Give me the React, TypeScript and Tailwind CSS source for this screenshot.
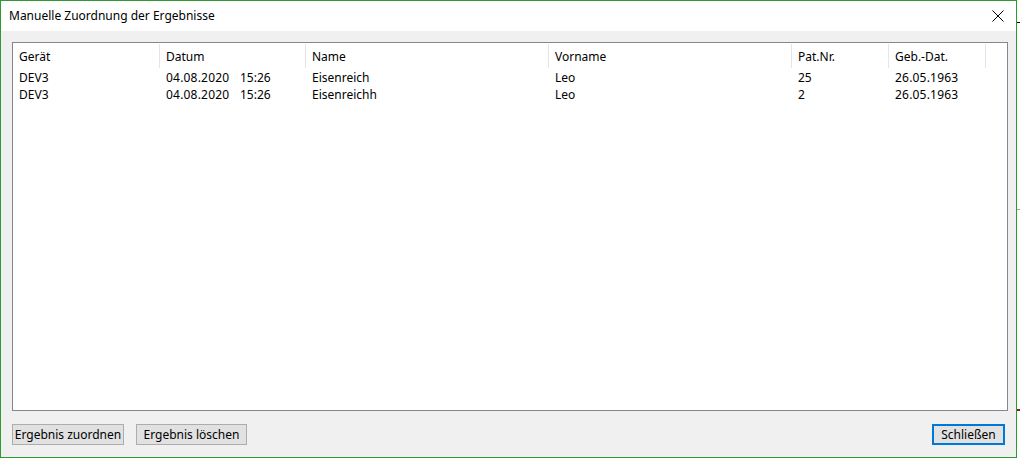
import React from 'react';

const columns = [
  { key: 'geraet', label: 'Gerät', width: 'w-[147px]' },
  { key: 'datum', label: 'Datum', width: 'w-[146px]' },
  { key: 'name', label: 'Name', width: 'w-[243px]' },
  { key: 'vorname', label: 'Vorname', width: 'w-[243px]' },
  { key: 'patnr', label: 'Pat.Nr.', width: 'w-[97px]' },
  { key: 'gebdat', label: 'Geb.-Dat.', width: 'w-[97px]' },
];

const rows = [
  { geraet: 'DEV3', datum: '04.08.2020', zeit: '15:26', name: 'Eisenreich', vorname: 'Leo', patnr: '25', gebdat: '26.05.1963' },
  { geraet: 'DEV3', datum: '04.08.2020', zeit: '15:26', name: 'Eisenreichh', vorname: 'Leo', patnr: '2', gebdat: '26.05.1963' },
];

function Button({ label, width, focused }: { label: string; width: string; focused?: boolean }) {
  return (
    <div
      className={
        'h-[21px] flex items-center justify-center bg-[#e1e1e1] text-[12px] text-black ' +
        width +
        (focused ? ' border-2 border-[#0078d7]' : ' border border-[#adadad]')
      }
    >
      {label}
    </div>
  );
}

export default function App() {
  return (
    <div className="w-[1020px] h-[459px] flex bg-white font-['Noto_Sans',sans-serif] text-[12px] text-black overflow-hidden">
      <div className="w-[1017px] h-[458px] flex flex-col border border-[#2f9a2f]">
        {/* title bar */}
        <div className="h-[30px] shrink-0 bg-white flex items-center justify-between pl-[8px] pr-[10px]">
          <span className="text-[12px] -mt-[1px]">Manuelle Zuordnung der Ergebnisse</span>
          <svg width="12" height="12" viewBox="0 0 12 12" className="mr-[2px]">
            <path d="M0.5 0.5 L11.5 11.5 M11.5 0.5 L0.5 11.5" stroke="#000" strokeWidth="1" />
          </svg>
        </div>

        {/* body */}
        <div className="flex-1 bg-[#f0f0f0] flex flex-col px-[11px] pt-[11px] pb-[11px]">
          <div className="w-[996px] h-[369px] bg-white border border-[#828790] flex flex-col">
            <div className="flex h-[26px] shrink-0">
              {columns.map((c) => (
                <div key={c.key} className={'flex items-center pl-[6px] pt-[2px] border-r border-[#e5e5e5] mt-[1px] mb-[1px] ' + c.width}>
                  {c.label}
                </div>
              ))}
            </div>
            {rows.map((r, i) => (
              <div key={i} className="flex h-[17px] items-center">
                <div className="w-[147px] pl-[6px]">{r.geraet}</div>
                <div className="w-[146px] pl-[6px] flex">
                  <span className="w-[74px] tracking-[0.2px]">{r.datum}</span>
                  <span>{r.zeit}</span>
                </div>
                <div className="w-[243px] pl-[6px]">{r.name}</div>
                <div className="w-[243px] pl-[6px]">{r.vorname}</div>
                <div className="w-[97px] pl-[6px]">{r.patnr}</div>
                <div className="w-[97px] pl-[6px] tracking-[0.2px]">{r.gebdat}</div>
              </div>
            ))}
          </div>

          <div className="flex items-center mt-[13px]">
            <Button label="Ergebnis zuordnen" width="w-[112px]" />
            <div className="w-[12px]" />
            <Button label="Ergebnis löschen" width="w-[111px]" />
            <div className="flex-1" />
            <Button label="Schließen" width="w-[73px]" focused />
          </div>
        </div>
      </div>
      <div className="flex-1 flex flex-col bg-white">
        <div className="h-[22px]" />
        <div className="h-[1px] bg-black" />
        <div className="h-[186px]" />
        <div className="h-[1px] bg-[#a0a0a0]" />
        <div className="h-[199px]" />
        <div className="h-[2px] bg-[#8b1a1a]" />
      </div>
    </div>
  );
}
